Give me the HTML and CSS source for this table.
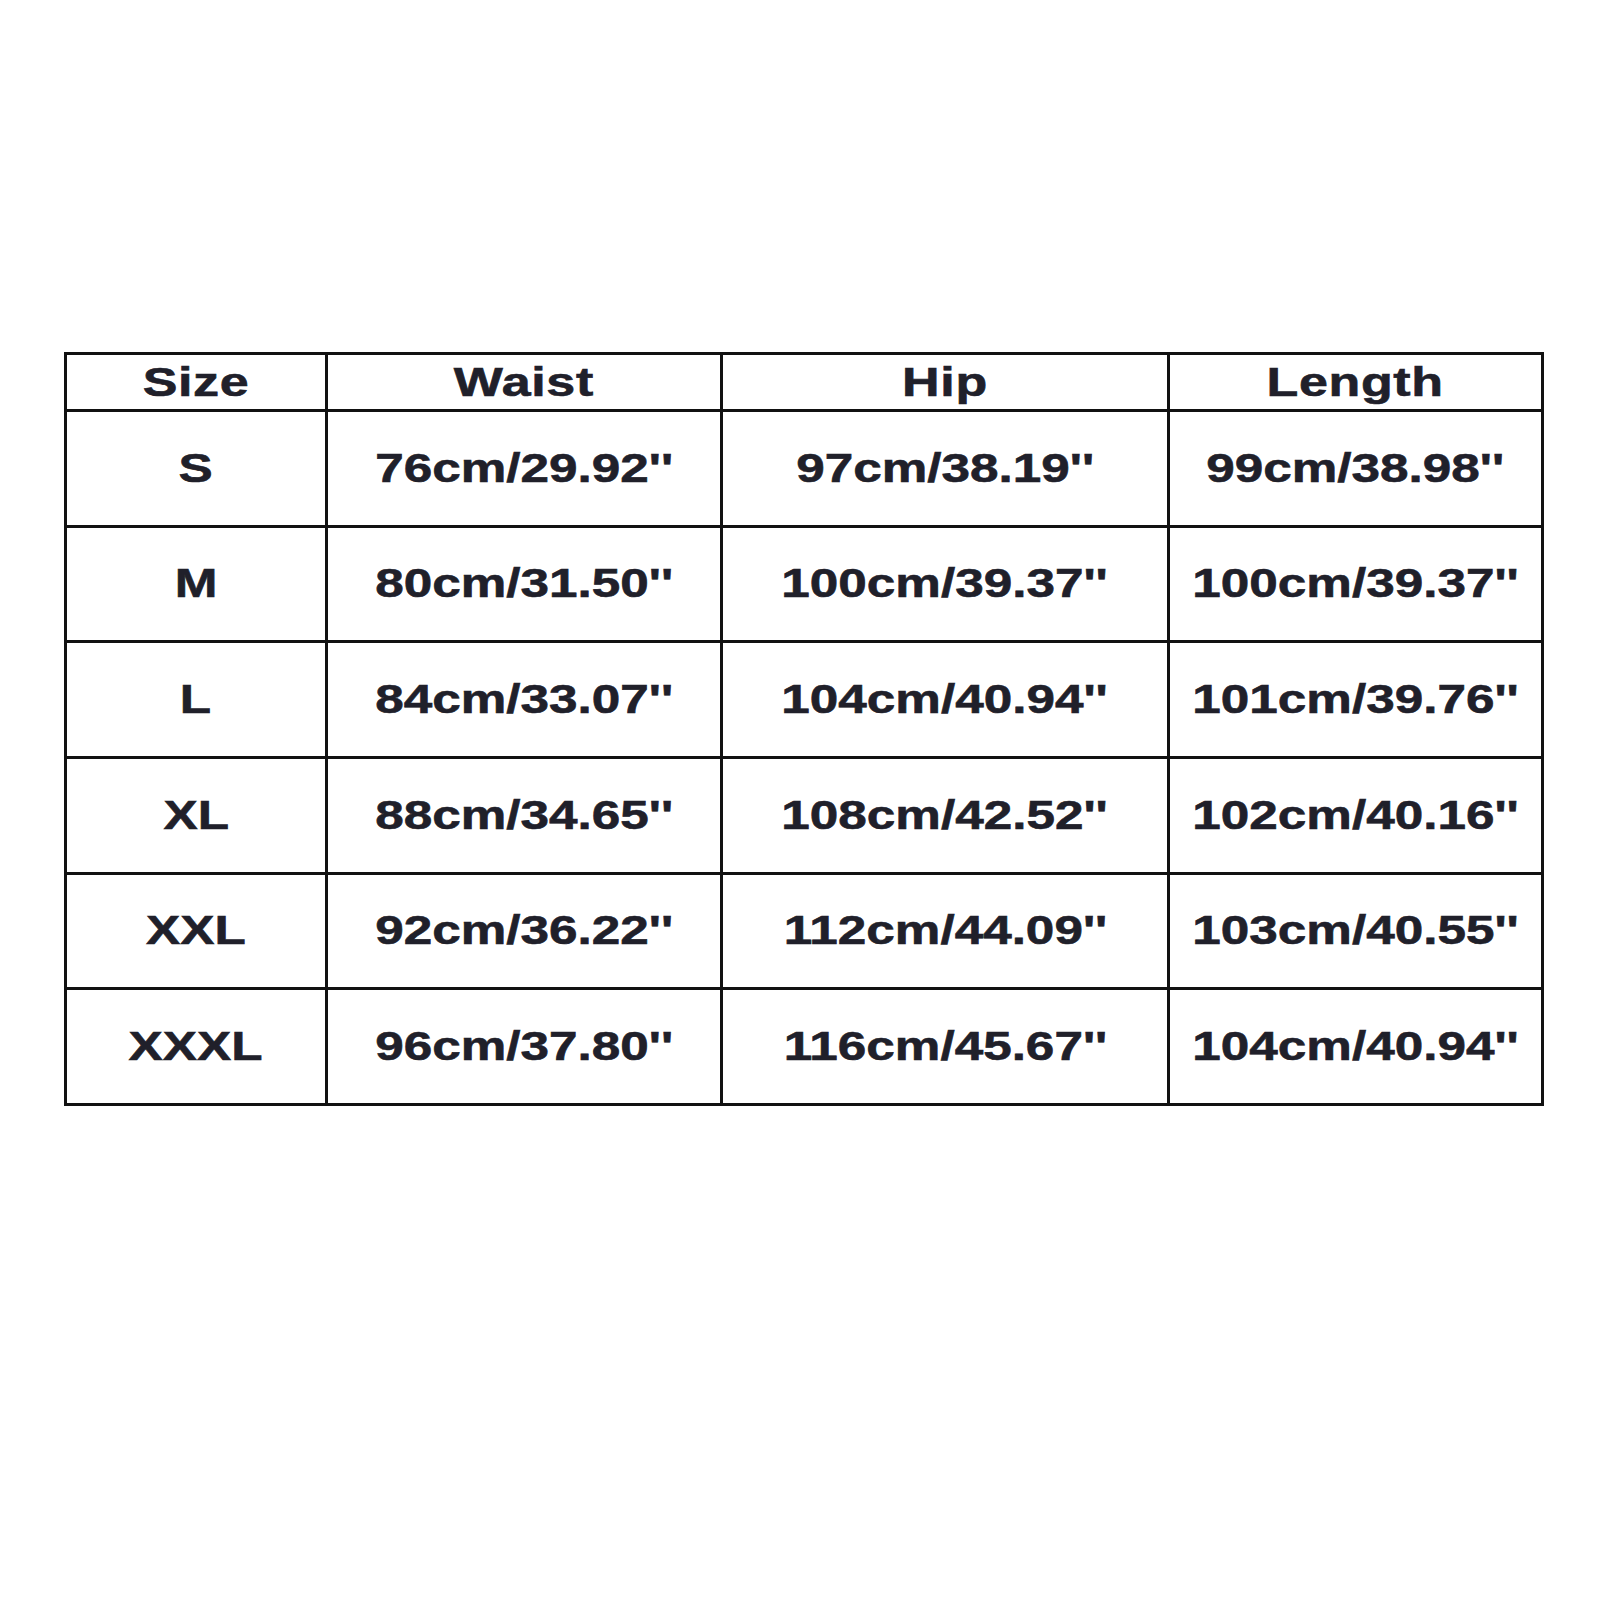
FILE: index.html
```html
<!DOCTYPE html>
<html lang="en">
<head>
<meta charset="utf-8">
<title>Size Chart</title>
<link rel="stylesheet" href="styles.css">
</head>
<body>
<div class="chart">
  <div class="cell head"><span>Size</span></div>
  <div class="cell head"><span>Waist</span></div>
  <div class="cell head"><span>Hip</span></div>
  <div class="cell head"><span>Length</span></div>

  <div class="cell"><span>S</span></div>
  <div class="cell"><span>76cm/29.92''</span></div>
  <div class="cell"><span>97cm/38.19''</span></div>
  <div class="cell"><span>99cm/38.98''</span></div>

  <div class="cell"><span>M</span></div>
  <div class="cell"><span>80cm/31.50''</span></div>
  <div class="cell"><span>100cm/39.37''</span></div>
  <div class="cell"><span>100cm/39.37''</span></div>

  <div class="cell"><span>L</span></div>
  <div class="cell"><span>84cm/33.07''</span></div>
  <div class="cell"><span>104cm/40.94''</span></div>
  <div class="cell"><span>101cm/39.76''</span></div>

  <div class="cell"><span>XL</span></div>
  <div class="cell"><span>88cm/34.65''</span></div>
  <div class="cell"><span>108cm/42.52''</span></div>
  <div class="cell"><span>102cm/40.16''</span></div>

  <div class="cell"><span>XXL</span></div>
  <div class="cell"><span>92cm/36.22''</span></div>
  <div class="cell"><span>112cm/44.09''</span></div>
  <div class="cell"><span>103cm/40.55''</span></div>

  <div class="cell"><span>XXXL</span></div>
  <div class="cell"><span>96cm/37.80''</span></div>
  <div class="cell"><span>116cm/45.67''</span></div>
  <div class="cell"><span>104cm/40.94''</span></div>
</div>
</body>
</html>
```

FILE: styles.css
```css
html, body {
  margin: 0;
  padding: 0;
  background: #ffffff;
}

body {
  padding: 352px 0 0 64px;
  font-family: "Liberation Sans", Arial, sans-serif;
  font-weight: bold;
  color: #20202a;
}

.chart {
  display: grid;
  width: 1480px;
  height: 754px;
  box-sizing: border-box;
  padding: 3px;
  gap: 3px;
  background: #111111;
  grid-template-columns: 258px 392px 444px 371px;
  grid-template-rows: 54px repeat(6, 1fr);
}

.cell {
  background: #ffffff;
  display: flex;
  align-items: center;
  justify-content: center;
  font-size: 41px;
  line-height: 1;
}

.cell span {
  display: inline-block;
  transform: scaleX(1.25);
  white-space: nowrap;
  -webkit-text-stroke: 0.6px #20202a;
}

.cell.head {
  font-size: 40px;
}

.cell.head span {
  transform: scaleX(1.3);
  letter-spacing: 0.5px;
}
```
